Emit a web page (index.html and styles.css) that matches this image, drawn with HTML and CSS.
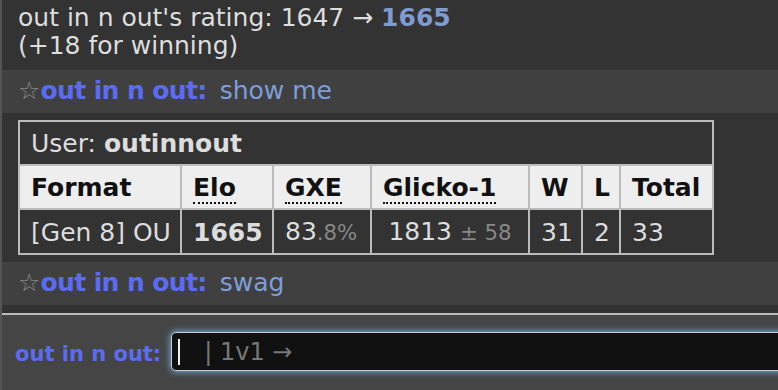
FILE: index.html
```html
<!DOCTYPE html>
<html lang="en">
  <head>
    <meta charset="UTF-8" />
    <title>Battle chat</title>
    <link rel="stylesheet" href="styles.css">
  </head>
  <body>
    <div class="room">
      <!-- chat log -->
      <div class="log">
        <div class="notice">
          out in n out's rating: 1647 &rarr; <strong class="new-rating">1665</strong><br />
          (+18 for winning)
        </div>

        <div class="chat">
          <span class="star">&#9734;</span><strong class="username">out in n out:</strong>
          <em class="message">show me</em>
        </div>

        <table class="ladder">
          <colgroup>
            <col class="col-format" />
            <col class="col-elo" />
            <col class="col-gxe" />
            <col class="col-glicko" />
            <col class="col-w" />
            <col class="col-l" />
            <col />
          </colgroup>
          <tr>
            <td colspan="7" class="user-cell">User: <strong>outinnout</strong></td>
          </tr>
          <tr>
            <th>Format</th>
            <th><abbr>Elo</abbr></th>
            <th><abbr>GXE</abbr></th>
            <th><abbr>Glicko-1</abbr></th>
            <th>W</th>
            <th>L</th>
            <th>Total</th>
          </tr>
          <tr>
            <td>[Gen 8] OU</td>
            <td><strong>1665</strong></td>
            <td>83<small>.8%</small></td>
            <td class="center">1813 <small>&plusmn; 58</small></td>
            <td>31</td>
            <td>2</td>
            <td>33</td>
          </tr>
        </table>

        <div class="chat">
          <span class="star">&#9734;</span><strong class="username">out in n out:</strong>
          <em class="message">swag</em>
        </div>
      </div>

      <!-- message box -->
      <div class="chatbox">
        <label class="chatbox-label">out in n out:</label>
        <div class="textbox">
          <span class="caret"></span>
          <span class="placeholder">| 1v1 &rarr;</span>
        </div>
      </div>
    </div>
  </body>
</html>
```

FILE: styles.css
```css
body {
  margin: 0;
  padding: 0;
  background: #333;
  font-family: "DejaVu Sans", Verdana, sans-serif;
  font-size: 25px;
  line-height: 27px;
  color: #ddd;
  overflow: hidden;
}
.room {
  border-left: 2px solid #555;
  height: 390px;
  display: flex;
  flex-direction: column;
}
.log {
  padding-bottom: 8px;
  border-bottom: 2px solid #bbb;
}
.notice {
  line-height: 28px;
  padding: 4px 16px 10px;
}
.new-rating {
  color: #7f9bd2;
}
.chat {
  background: #404040;
  padding: 7px 16px 9px;
}
.star {
  color: #888;
  font-size: 25px;
}
.username {
  color: #5b6cf2;
  letter-spacing: -0.6px;
  margin-right: 5px;
}
.message {
  font-style: normal;
  color: #7f9dd8;
}
.ladder {
  margin: 7px 16px;
  width: 696px;
  table-layout: fixed;
  border: 1px solid #bbb;
  border-spacing: 0;
}
.col-format { width: 162px; }
.col-elo { width: 92px; }
.col-gxe { width: 98px; }
.col-glicko { width: 158px; }
.col-w { width: 53px; }
.col-l { width: 38px; }
.ladder th,
.ladder td {
  border: 1px solid #bbb;
  padding: 8px 0 7px 11px;
  text-align: left;
  white-space: nowrap;
}
.ladder th {
  background: #eee;
  color: #111;
}
.ladder abbr {
  text-decoration: none;
  border-bottom: 2px dotted #111;
}
.ladder small {
  font-size: 0.85em;
  color: #888;
}
.ladder .center {
  text-align: center;
  padding-left: 0;
}
.user-cell strong {
  color: #ddd;
}
.chatbox {
  flex: 1;
  background: #454545;
  display: flex;
  align-items: flex-start;
  padding: 17px 0 0 13px;
}
.chatbox-label {
  color: #5b6cf2;
  font-weight: bold;
  font-size: 21px;
  line-height: 39px;
  padding-top: 3px;
  margin-right: 10px;
  white-space: nowrap;
}
.textbox {
  flex: none;
  width: 700px;
  height: 37px;
  background: #111;
  border: 1px solid #ccc;
  border-radius: 5px;
  box-shadow: 0 0 6px 1px #6fa6d8;
  display: flex;
  align-items: center;
  color: #777;
  font-size: 24px;
}
.caret {
  width: 2px;
  height: 26px;
  background: #eee;
  margin: 0 24px 0 6px;
}
.placeholder {
  padding-top: 2px;
}
```
